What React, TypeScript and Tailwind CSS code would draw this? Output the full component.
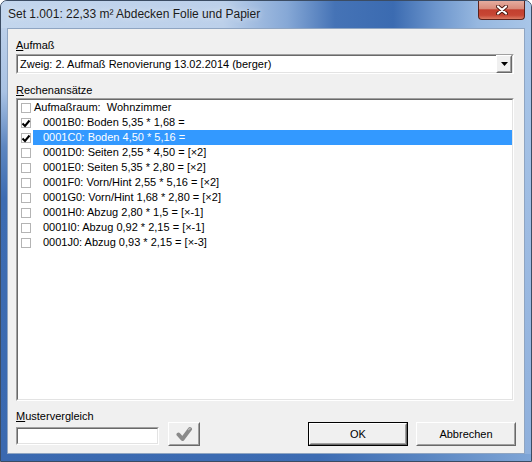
import React from "react";

const rows = [
  { text: "0001B0: Boden 5,35 * 1,68 =", checked: true },
  { text: "0001C0: Boden 4,50 * 5,16 =", checked: true, selected: true },
  { text: "0001D0: Seiten 2,55 * 4,50 = [×2]" },
  { text: "0001E0: Seiten 5,35 * 2,80 = [×2]" },
  { text: "0001F0: Vorn/Hint 2,55 * 5,16 = [×2]" },
  { text: "0001G0: Vorn/Hint 1,68 * 2,80 = [×2]" },
  { text: "0001H0: Abzug 2,80 * 1,5 = [×-1]" },
  { text: "0001I0: Abzug 0,92 * 2,15 = [×-1]" },
  { text: "0001J0: Abzug 0,93 * 2,15 = [×-3]" },
];

const Sunken = ({ className = "", children }: { className?: string; children?: React.ReactNode }) => (
  <div className={`border border-t-[#a0a0a0] border-l-[#a0a0a0] border-b-white border-r-white ${className}`}>
    <div className="h-full w-full border border-t-[#696969] border-l-[#696969] border-b-[#e3e3e3] border-r-[#e3e3e3] bg-white">
      {children}
    </div>
  </div>
);

const Raised = ({ className = "", children }: { className?: string; children?: React.ReactNode }) => (
  <div className={`border border-t-white border-l-white border-b-[#696969] border-r-[#696969] bg-[#f0f0f0] ${className}`}>
    <div className="h-full w-full border border-t-[#f0f0f0] border-l-[#f0f0f0] border-b-[#a0a0a0] border-r-[#a0a0a0] flex items-center justify-center">
      {children}
    </div>
  </div>
);

const CheckBox = ({ checked }: { checked?: boolean }) => (
  <div className="relative w-[10px] h-[10px] border border-[#b4b4b4] bg-white shrink-0">
    {checked && (
      <svg className="absolute -left-[1px] top-[0px]" width="10" height="9" viewBox="0 0 10 9">
        <path d="M1.5 4.5 L4 7 L8.5 1.5" fill="none" stroke="#000" strokeWidth="2" />
      </svg>
    )}
  </div>
);

export default function App() {
  return (
    <div className="w-[532px] h-[462px] flex flex-col rounded-t-[7px] border border-[#3b4c63] overflow-hidden bg-[#b9cee9] font-['Liberation_Sans',Arial,sans-serif] text-[11px] text-black">
      {/* title bar */}
      <div className="h-[27px] flex items-start bg-[linear-gradient(90deg,#c3d6ed_0%,#bcd0ea_42%,#86a8d6_54%,#4573b6_63%,#3b6bb1_74%,#6c95cc_82%,#97b8e0_90%,#a9c6e8_100%)]">
        <span className="pl-[7px] pt-[6px] text-[12px] leading-[15px] text-[#1b1b1b] [text-shadow:0_0_6px_rgba(255,255,255,0.8)]">
          Set 1.001: 22,33 m² Abdecken Folie und Papier
        </span>
        <div className="ml-auto mr-[6px] -mt-[1px] w-[47px] h-[20px] rounded-b-[4px] border border-t-0 border-[#5b231c] flex items-center justify-center bg-[linear-gradient(180deg,#e6b1a4_0%,#d98b7b_45%,#c3402f_52%,#c74634_80%,#db7a62_100%)]">
          <svg width="12" height="10" viewBox="0 0 12 10">
            <path d="M2 1.5 L10 8.5 M10 1.5 L2 8.5" stroke="#4a1810" strokeWidth="4" strokeLinecap="round" />
            <path d="M2 1.5 L10 8.5 M10 1.5 L2 8.5" stroke="#fff" strokeWidth="2.2" strokeLinecap="round" />
          </svg>
        </div>
      </div>

      <div className="flex h-[426px]">
        <div className="w-[6px] bg-[linear-gradient(180deg,#bcd0ea_0%,#a9c2e3_15%,#5d86c0_28%,#3d6cb2_40%,#3a69b0_100%)]" />

        {/* client area */}
        <div className="w-[518px] border border-[#8fa5c2] bg-[#f0f0f0] flex flex-col pl-[8px] pr-[8px] pt-[10px]">
          <div className="leading-[13px] h-[13px]">
            <span className="underline">A</span>ufmaß
          </div>
          <Sunken className="mt-[2px] w-[498px] h-[20px]">
            <div className="flex h-full items-center">
              <span className="pl-[2px] flex-1 whitespace-nowrap">Zweig: 2. Aufmaß Renovierung 13.02.2014 (berger)</span>
              <Raised className="w-[16px] h-[18px]">
                <svg width="7" height="4" viewBox="0 0 7 4">
                  <path d="M0 0 H7 L3.5 4 Z" fill="#000" />
                </svg>
              </Raised>
            </div>
          </Sunken>

          <div className="mt-[10px] leading-[13px] h-[13px]">
            <span className="underline">R</span>echenansätze
          </div>
          <Sunken className="mt-[1px] w-[498px] h-[303px]">
            <div className="flex flex-col">
              <div className="flex h-[15px] items-center">
                <div className="ml-[3px]">
                  <CheckBox />
                </div>
                <span className="ml-[2px] pl-[1px] leading-[15px] whitespace-pre">Aufmaßraum:  Wohnzimmer</span>
              </div>
              {rows.map((r, i) => (
                <div key={i} className="flex h-[15px] items-center">
                  <div className="ml-[3px]">
                    <CheckBox checked={r.checked} />
                  </div>
                  <span
                    className={`ml-[2px] flex-1 pl-[10px] leading-[15px] whitespace-nowrap ${
                      r.selected ? "bg-[#3399ff] text-white" : ""
                    }`}
                  >
                    {r.text}
                  </span>
                </div>
              ))}
            </div>
          </Sunken>

          <div className="mt-[9px] flex items-end">
            <div className="flex flex-col">
              <div className="leading-[13px] h-[13px]">
                <span className="underline">M</span>ustervergleich
              </div>
              <Sunken className="mt-[4px] mb-[1px] w-[143px] h-[18px]" />
            </div>
            <Raised className="ml-[9px] w-[32px] h-[24px]">
              <svg width="17" height="16" viewBox="0 0 17 16">
                <path d="M2.5 8.5 L6.5 13 L14 3" fill="none" stroke="#8a8a8a" strokeWidth="4" strokeLinecap="round" strokeLinejoin="round" />
                <path d="M12.5 3.5 L14 2.5" fill="none" stroke="#b8b8b8" strokeWidth="1.5" strokeLinecap="round" />
              </svg>
            </Raised>
            <div className="ml-auto border border-black">
              <Raised className="w-[98px] h-[22px]">OK</Raised>
            </div>
            <Raised className="ml-[8px] w-[100px] h-[24px]">Abbrechen</Raised>
          </div>
        </div>

        <div className="w-[6px] bg-[linear-gradient(180deg,#a9c6e8_0%,#9dbbe2_50%,#8fb0dc_100%)]" />
      </div>

      <div className="h-[7px] bg-[linear-gradient(90deg,#3a69b0_0%,#3d6cb3_60%,#5a86c2_80%,#7fa5d6_100%)]" />
    </div>
  );
}
